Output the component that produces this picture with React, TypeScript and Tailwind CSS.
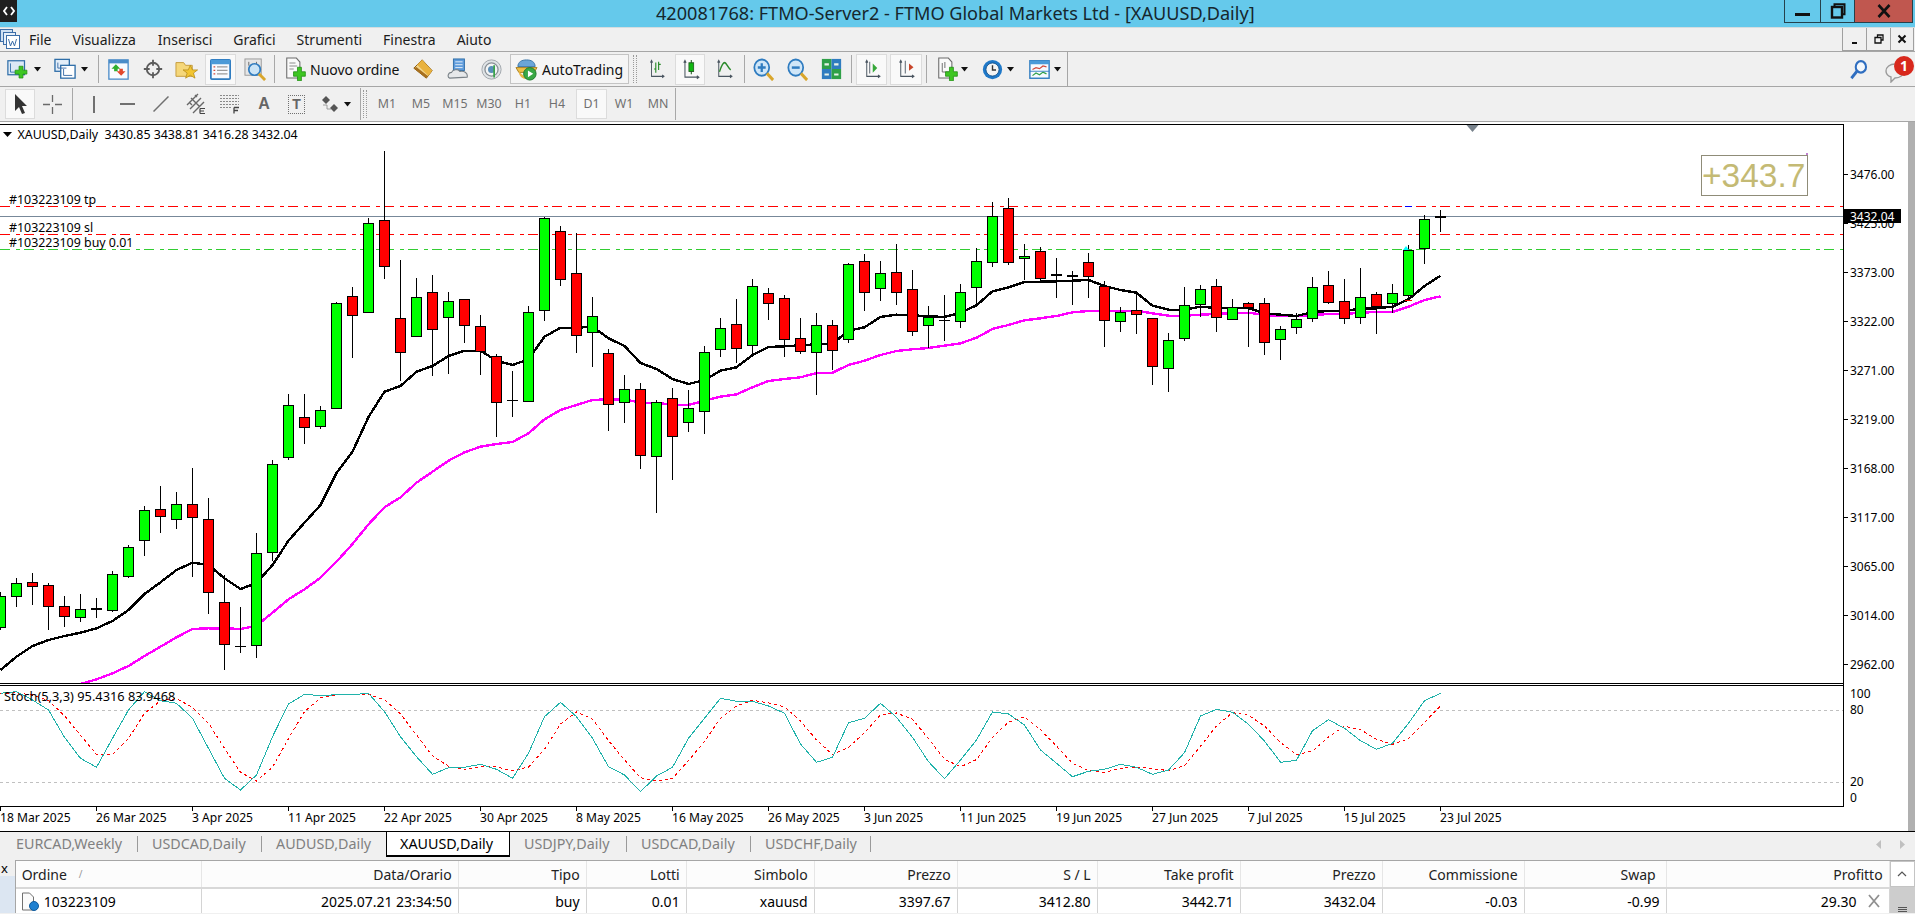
import React from "react";

type Kind = "g" | "r" | "d" | "t";
// [wickTop, bodyTop, bodyBottom, wickBottom, kind] measured against a base row (y = base + v / 3)
const A: [number, number, number, number, Kind][] = [
  [517, 529, 622, 630, "g"], [475, 490, 529, 560, "g"], [460, 487, 499, 555, "r"], [490, 496, 559, 629, "r"],
  [529, 559, 587, 620, "r"], [522, 568, 592, 605, "g"], [534, 566, 566, 593, "d"], [453, 463, 569, 575, "g"],
  [376, 382, 467, 473, "g"], [259, 271, 361, 407, "g"], [198, 268, 289, 338, "r"], [216, 253, 298, 326, "g"],
  [144, 253, 292, 470, "r"], [235, 298, 517, 581, "r"], [465, 547, 673, 749, "r"], [561, 677, 677, 698, "t"],
  [339, 400, 676, 713, "g"], [120, 133, 397, 423, "g"],
];
const B: [number, number, number, number, Kind][] = [
  [822, 856, 1012, 1019, "g"], [822, 892, 922, 971, "r"], [858, 871, 919, 926, "g"], [547, 550, 865, 865, "g"],
  [501, 529, 586, 713, "r"], [293, 310, 577, 577, "g"], [93, 301, 439, 476, "r"], [420, 595, 697, 782, "r"],
  [474, 532, 649, 652, "g"], [465, 517, 628, 767, "r"], [516, 544, 592, 761, "g"], [538, 538, 616, 668, "r"],
  [586, 619, 694, 764, "r"], [703, 709, 847, 950, "r"], [753, 841, 841, 890, "t"], [559, 577, 844, 844, "g"],
  [292, 295, 571, 602, "g"], [319, 334, 478, 497, "r"], [340, 460, 646, 700, "r"], [531, 589, 637, 740, "g"],
  [688, 700, 853, 932, "r"], [766, 808, 847, 908, "g"],
];
const D: [number, number, number, number, Kind][] = [
  [610, 628, 826, 866, "r"], [660, 667, 829, 999, "g"], [625, 655, 769, 900, "r"], [630, 685, 727, 755, "g"],
  [498, 517, 694, 761, "g"], [414, 445, 508, 530, "g"], [357, 433, 505, 549, "r"], [297, 319, 496, 530, "g"],
  [324, 340, 370, 420, "r"], [346, 355, 478, 530, "r"], [414, 475, 514, 521, "r"], [400, 436, 517, 644, "g"],
  [420, 436, 511, 569, "r"], [250, 253, 478, 488, "g"], [222, 244, 337, 392, "r"], [243, 280, 325, 362, "g"],
  [193, 277, 337, 375, "r"], [270, 328, 454, 467, "r"], [378, 411, 436, 505, "g"], [346, 421, 421, 482, "t"],
  [312, 337, 424, 443, "g"], [205, 244, 322, 376, "g"], [67, 109, 247, 260, "g"], [55, 85, 247, 254, "r"],
  [193, 229, 235, 300, "g"], [201, 214, 295, 302, "r"], [235, 285, 285, 353, "d"], [274, 288, 288, 374, "d"],
  [220, 247, 289, 353, "r"], [304, 319, 421, 500, "r"], [381, 397, 424, 455, "g"], [340, 391, 403, 461, "r"],
  [415, 415, 559, 614, "r"], [460, 481, 565, 635, "g"], [321, 376, 475, 482, "g"], [316, 328, 373, 410, "g"],
  [297, 319, 412, 455, "r"], [358, 382, 418, 421, "g"], [367, 370, 382, 500, "r"], [354, 370, 487, 524, "r"],
  [438, 448, 478, 539, "g"], [400, 418, 442, 461, "g"], [291, 322, 415, 425, "g"], [273, 316, 367, 371, "r"],
  [297, 364, 415, 431, "r"], [265, 352, 412, 431, "g"], [337, 343, 379, 461, "r"], [312, 340, 370, 398, "g"],
  [196, 211, 346, 361, "g"], [105, 118, 205, 251, "g"], [90, 111, 111, 155, "d"],
];
const scale = (rows: typeof A, base: number) =>
  rows.map(([a, b, c, d, k]) => [base + a / 3, base + b / 3, base + c / 3, base + d / 3, k] as [number, number, number, number, Kind]);
const candles = [...scale(A, 420), ...scale(B, 120), ...scale(D, 180)];

const black = [670, 656.7, 646, 640, 636, 632.7, 628.3, 621, 610, 594, 582.3, 570, 562.7, 565, 578.3, 589, 583, 565, 540.7, 522.7, 505, 473, 451.7, 417, 391.7, 386, 371.7, 366, 356, 350.7, 350.7, 360.7, 365, 359.3, 336.7, 327.7, 327.7, 326.7, 338.3, 346, 363, 369, 379, 384, 380, 370.7, 367.3, 355, 347, 346.3, 345.3, 344.3, 343.7, 330.7, 327.3, 317, 314.7, 315.3, 316.3, 317, 312.7, 305.3, 291.3, 287.3, 282, 281.7, 281.3, 280.7, 280, 286, 290, 292.7, 305.7, 309.7, 309.7, 306.7, 308, 307.7, 308, 313.3, 314.7, 316, 312, 311, 311, 308.7, 308.3, 306.7, 299.3, 286, 275.7];
const magenta = [720, 712, 705, 698, 692, 684, 679.3, 673.3, 666, 656, 646.7, 637.3, 629, 628.3, 628.3, 629, 625.7, 612.7, 599.3, 589.3, 577.7, 561.7, 544, 524.3, 507.3, 497.3, 482.7, 471.7, 460.7, 452.3, 446.7, 444, 442, 433.3, 419.3, 410, 405, 400, 399.3, 399.3, 402.7, 402.7, 405, 405, 400.7, 396.7, 394.3, 387.3, 381, 379, 377.3, 373, 372.7, 365, 360.7, 355, 351, 349.3, 348, 345.7, 343.3, 337.7, 329, 325, 320.3, 318.3, 316, 312.3, 311, 310.7, 310.7, 310.7, 313.3, 315.7, 315.7, 314.7, 314, 313, 312.7, 315, 316, 316, 315, 314, 314, 312.7, 312, 312, 306.7, 300, 296.3];
const stochZ = [40, 35, 60, 90, 172, 235, 262, 175, 90, 35, 62, 70, 115, 205, 295, 330, 285, 170, 72, 43, 47, 44, 44, 40, 95, 170, 230, 283, 263, 262, 253, 268, 295, 220, 110, 67, 110, 175, 260, 285, 335, 288, 262, 175, 115, 55, 64, 64, 78, 100, 192, 247, 232, 128, 115, 70, 112, 172, 245, 296, 240, 180, 96, 102, 135, 210, 250, 290, 274, 268, 253, 262, 283, 270, 218, 108, 88, 97, 133, 183, 247, 241, 152, 119, 145, 182, 208, 190, 130, 62, 40];
const stoch = stochZ.map((v) => 680 + v / 3);
const signal = stoch.map((_, i) => (stoch[Math.max(0, i - 2)] + stoch[Math.max(0, i - 1)] + stoch[i]) / 3);
const pts = (a: number[]) => a.map((y, i) => `${16 * i + 0.5},${y.toFixed(1)}`).join(" ");

const prices: [string, number][] = [["3476.00", 174.5], ["3425.00", 223.5], ["3373.00", 272.5], ["3322.00", 321.5], ["3271.00", 370.5], ["3219.00", 419.5], ["3168.00", 468.5], ["3117.00", 517.5], ["3065.00", 566.5], ["3014.00", 615.5], ["2962.00", 664.5]];
const dates = ["18 Mar 2025", "26 Mar 2025", "3 Apr 2025", "11 Apr 2025", "22 Apr 2025", "30 Apr 2025", "8 May 2025", "16 May 2025", "26 May 2025", "3 Jun 2025", "11 Jun 2025", "19 Jun 2025", "27 Jun 2025", "7 Jul 2025", "15 Jul 2025", "23 Jul 2025"];

function Chart() {
  return (
    <svg width={1908} height={710} viewBox="0 122 1908 710" className="block shrink-0">
      <defs>
        <clipPath id="mainPane"><rect x="0" y="125" width="1843" height="558" /></clipPath>
        <clipPath id="stochPane"><rect x="0" y="686" width="1843" height="120" /></clipPath>
      </defs>
      <rect x="0" y="122" width="1908" height="710" fill="#ffffff" />
      <g clipPath="url(#mainPane)">
        <g shapeRendering="crispEdges">
          <line x1="0" x2="1843" y1="206.5" y2="206.5" stroke="#ff0000" strokeDasharray="10 6 4 4" />
          <line x1="0" x2="1843" y1="234.5" y2="234.5" stroke="#ff0000" strokeDasharray="10 6 4 4" />
          <line x1="0" x2="1843" y1="249.5" y2="249.5" stroke="#32cd32" strokeDasharray="10 6 4 4" />
          <line x1="0" x2="1843" y1="216.5" y2="216.5" stroke="#778899" />
        </g>
        <polyline points={pts(magenta)} fill="none" stroke="#ff00ff" strokeWidth="2.4" shapeRendering="crispEdges" />
        <polyline points={pts(black)} fill="none" stroke="#000000" strokeWidth="2.4" shapeRendering="crispEdges" />
        <g shapeRendering="crispEdges">
          {candles.map(([wt, bt, bb, wb, k], i) => {
            const x = 16 * i;
            const top = Math.round(bt);
            const bot = Math.round(bb);
            return (
              <g key={i}>
                <line x1={x + 0.5} x2={x + 0.5} y1={Math.round(wt)} y2={Math.round(wb)} stroke="#000000" />
                {k === "d" && <rect x={x - 5} y={top - 1} width={11} height={2} fill="#000000" />}
                {k === "t" && <rect x={x - 5} y={top} width={11} height={1} fill="#000000" />}
                {(k === "g" || k === "r") && (
                  <rect x={x - 4.5} y={top + 0.5} width={10} height={bot - top} fill={k === "g" ? "#00ff00" : "#ff0000"} stroke="#000000" />
                )}
              </g>
            );
          })}
        </g>
        <rect x="1405" y="206" width="7" height="1" fill="#0000ff" />
        <rect x="1405" y="300" width="7" height="1" fill="#ff0000" />
        <path d="M1403 250l3-4 3 4z" fill="#00ffff" />
        <text x="9" y="204" fontSize="12.4" fill="#000000">#103223109 tp</text>
        <text x="9" y="232" fontSize="12.4" fill="#000000">#103223109 sl</text>
        <text x="9" y="247" fontSize="12.4" fill="#000000">#103223109 buy 0.01</text>
        <path d="M3 132h9l-4.5 5z" fill="#000000" />
        <text x="17.5" y="139" fontSize="12.4" fill="#000000" xmlSpace="preserve">XAUUSD,Daily  3430.85 3438.81 3416.28 3432.04</text>
        <path d="M1466.5 125h12l-6 7z" fill="#78828c" />
        <rect x="1701.5" y="155.5" width="106" height="40" fill="#ffffff" stroke="#8f8c78" />
        <rect x="1806" y="153" width="2" height="2" fill="#c080d0" />
        <text x="1702" y="187" fontSize="33.5" fill="#c4ba74" className="font-['Liberation_Sans',sans-serif]">+343.7</text>
      </g>
      <g clipPath="url(#stochPane)">
        <line x1="0" x2="1843" y1="710.5" y2="710.5" stroke="#c0c0c0" strokeDasharray="3 3" />
        <line x1="0" x2="1843" y1="782.5" y2="782.5" stroke="#c0c0c0" strokeDasharray="3 3" />
        <polyline points={pts(signal)} fill="none" stroke="#ff0000" strokeDasharray="3 3" shapeRendering="crispEdges" />
        <polyline points={pts(stoch)} fill="none" stroke="#20b2aa" shapeRendering="crispEdges" />
        <text x="4" y="701" fontSize="12.8" fill="#000000">Stoch(5,3,3) 95.4316 83.9468</text>
      </g>
      <g shapeRendering="crispEdges" stroke="#000000">
        <line x1="0" x2="1844" y1="124" y2="124" strokeWidth="1" />
        <line x1="0" x2="1844" y1="683.5" y2="683.5" />
        <line x1="0" x2="1844" y1="685.5" y2="685.5" />
        <line x1="0" x2="1844" y1="806.5" y2="806.5" />
        <line x1="1843.5" x2="1843.5" y1="124" y2="807" />
        {prices.map(([, y]) => <line key={y} x1="1844" x2="1848" y1={y} y2={y} />)}
        {dates.map((_, i) => <line key={i} x1={96 * i + 0.5} x2={96 * i + 0.5} y1="807" y2="811" />)}
      </g>
      {prices.map(([p, y]) => (
        <text key={p} x="1850" y={y + 4.5} fontSize="12" fill="#000000">{p}</text>
      ))}
      <rect x="1844" y="209" width="57" height="14" fill="#000000" />
      <text x="1850" y="220.5" fontSize="12" fill="#ffffff">3432.04</text>
      <text x="1850" y="698" fontSize="12" fill="#000000">100</text>
      <text x="1850" y="714" fontSize="12" fill="#000000">80</text>
      <text x="1850" y="786" fontSize="12" fill="#000000">20</text>
      <text x="1850" y="802" fontSize="12" fill="#000000">0</text>
      {dates.map((d, i) => (
        <text key={d} x={96 * i} y="821.5" fontSize="12.1" fill="#000000">{d}</text>
      ))}
    </svg>
  );
}

const Plus = ({ x, y, s = 4 }: { x: number; y: number; s?: number }) => (
  <path
    d={`M${x - s / 2} ${y - s * 1.5}h${s}v${s}h${s}v${s}h${-s}v${s}h${-s}v${-s}h${-s}v${-s}h${s}z`}
    fill="#3ec622"
    stroke="#1c8a10"
    strokeWidth="0.8"
  />
);

const Axes = () => (
  <path d="M5 3v17h17M3.5 5L5 2.5 6.5 5M20 18.5l2.5 1.5-2.5 1.5" fill="none" stroke="#4a5560" strokeWidth="1.3" />
);

const Ic = ({ w, h, children }: { w: number; h: number; children: React.ReactNode }) => (
  <svg width={w} height={h} viewBox="0 0 24 24" preserveAspectRatio="none" className="block">{children}</svg>
);

const Caret = () => (
  <svg width="7" height="5" viewBox="0 0 7 5" className="block"><path d="M0 0h7L3.5 4.5z" fill="#111111" /></svg>
);

const Sep = ({ className }: { className: string }) => <div className={`h-[28px] w-px bg-[#a8a8a8] ${className}`} />;

function TitleBar() {
  return (
    <div className="flex h-[27px] shrink-0 items-start bg-[#65c9eb]">
      <div className="flex h-[22px] w-[17px] items-center justify-center bg-[#1f1f1f]">
        <svg width="12" height="12" viewBox="0 0 12 12">
          <path d="M4 2L1 6l3 4M8 2l3 4-3 4" fill="none" stroke="#ffffff" strokeWidth="1.8" />
        </svg>
      </div>
      <div className="ml-[639px] whitespace-nowrap text-[18.1px] leading-[26px] text-[#16272e]">
        420081768: FTMO-Server2 - FTMO Global Markets Ltd - [XAUUSD,Daily]
      </div>
      <div className="ml-auto mr-[2px] flex h-[23px]">
        <div className="flex w-[37px] items-end justify-center border-x border-b border-[#25414c] pb-[6px]">
          <div className="h-[3px] w-[15px] bg-[#111111]" />
        </div>
        <div className="flex w-[33px] items-center justify-center border-b border-[#25414c]">
          <svg width="16" height="16" viewBox="0 0 16 16">
            <path d="M4.5 3.5V1.2h10v10h-2.5" fill="none" stroke="#111111" strokeWidth="2" />
            <rect x="2" y="4" width="10" height="10.5" fill="none" stroke="#111111" strokeWidth="2.4" />
          </svg>
        </div>
        <div className="flex w-[59px] items-center justify-center border-x border-b border-[#25414c] bg-[#c0574f]">
          <svg width="14" height="14" viewBox="0 0 14 14">
            <path d="M1.5 1L12.5 13M12.5 1L1.5 13" stroke="#111111" strokeWidth="2.6" />
          </svg>
        </div>
      </div>
    </div>
  );
}

function MenuBar() {
  return (
    <div className="flex h-[25px] shrink-0 items-center border-y border-b-[#a6a6a6] border-t-[#d4dde0] bg-[#f0f0f0] text-[14px] text-[#1c1c1c]">
      <div className="w-[20px]">
        <svg width="20" height="21" viewBox="0 0 20 21" className="block">
          <rect x="0.5" y="0.5" width="12" height="12" fill="#cfe0f2" stroke="#3d6ea8" />
          <rect x="3.5" y="3.5" width="12" height="12" fill="#e6eff9" stroke="#3d6ea8" />
          <rect x="6.5" y="6.5" width="13" height="13" fill="#ffffff" stroke="#3d6ea8" />
          <path d="M8.5 10l2 7 2-5 2 5 2-7" fill="none" stroke="#3d6ea8" strokeWidth="1" />
        </svg>
      </div>
      <div className="ml-[9px] flex gap-[21px]">
        <span>File</span>
        <span>Visualizza</span>
        <span className="ml-[1px]">Inserisci</span>
        <span>Grafici</span>
        <span>Strumenti</span>
        <span>Finestra</span>
        <span>Aiuto</span>
      </div>
      <div className="ml-auto mr-px flex h-[23px] self-start">
        {["min", "max", "close"].map((k) => (
          <div key={k} className="flex w-[24px] items-center justify-center border-b border-l border-[#a0a0a0] last:border-r">
            <svg width="10" height="10" viewBox="0 0 10 10">
              {k === "min" && <rect x="2" y="8" width="5" height="2" fill="#111111" />}
              {k === "max" && <path d="M3.5 3V1h5.5v5H7M1 3.5h6v5.5H1z" fill="none" stroke="#111111" strokeWidth="1.3" />}
              {k === "close" && <path d="M1.5 1.5l7 7M8.5 1.5l-7 7" stroke="#111111" strokeWidth="2" />}
            </svg>
          </div>
        ))}
      </div>
    </div>
  );
}

function ToolbarOne() {
  return (
    <div className="flex h-[35px] shrink-0 items-center border-b border-[#a6a6a6] bg-[#f0f0f0] text-[14px] text-[#111111]">
      <div className="flex h-full w-[1071px] items-center border-r border-[#a6a6a6]">
        <div className="ml-[7px] w-[20px]">
          <Ic w={21} h={21}><rect x="1" y="2" width="19" height="16" fill="#dce9f6" stroke="#2f6ea8" strokeWidth="1.4" /><path d="M4 5v10h12" fill="none" stroke="#2f6ea8" /><Plus x={16} y={15} s={4.5} /></Ic>
        </div>
        <div className="ml-[7px] w-[7px]"><Caret /></div>
        <div className="ml-[13px] w-[23px]">
          <Ic w={23} h={22}><rect x="1" y="1.5" width="15" height="13" fill="#e4eef8" stroke="#2f6ea8" strokeWidth="1.4" /><rect x="7" y="8" width="15" height="14" fill="#ffffff" stroke="#2f6ea8" strokeWidth="1.4" /><path d="M4 5v6h9M10 12v7h9" fill="none" stroke="#3d6ea8" /></Ic>
        </div>
        <div className="ml-[4px] w-[7px]"><Caret /></div>
        <Sep className="ml-[10px]" />
        <div className="ml-[9px] w-[21px]">
          <Ic w={21} h={21}><rect x="1" y="1" width="22" height="22" fill="#f8fbff" stroke="#4a8cc8" strokeWidth="1.5" /><rect x="1" y="1" width="22" height="4" fill="#4a8cc8" /><path d="M9 6l5 5h-3v3H7v-3H4z" fill="#2eae2e" /><path d="M15 19l-5-5h3v-3h4v3h3z" fill="#e2482c" /></Ic>
        </div>
        <div className="ml-[14px] w-[20px]">
          <Ic w={20} h={20}><circle cx="12" cy="12" r="7.5" fill="none" stroke="#5c5c5c" strokeWidth="2.2" /><path d="M12 1v7M12 16v7M1 12h7M16 12h7" stroke="#5c5c5c" strokeWidth="2.2" /></Ic>
        </div>
        <div className="ml-[12px] w-[23px]">
          <Ic w={23} h={22}><path d="M1 5h8l2 3h7v12H1z" fill="#f5d77a" stroke="#c49b3c" /><path d="M16 8l2.2 5h5.4l-4.3 3.4 1.6 5.6-4.9-3.2-4.9 3.2 1.6-5.6-4.3-3.4h5.4z" fill="#f2c531" stroke="#b48a18" strokeWidth="0.8" /></Ic>
        </div>
        <div className="ml-[7px] flex h-[31px] w-[31px] items-center justify-center border border-[#dcdcdc] bg-[#f9f9f9]">
          <Ic w={21} h={21}><rect x="1" y="1" width="22" height="22" rx="1" fill="#f6faff" stroke="#2f7cc0" strokeWidth="2" /><rect x="1" y="1" width="22" height="5" fill="#4a9ad8" /><path d="M8 9h12M8 13h12M8 17h12" stroke="#9a9a9a" strokeWidth="1.4" /><path d="M4 9h2M4 13h2M4 17h2" stroke="#d24a3a" strokeWidth="1.6" /></Ic>
        </div>
        <div className="ml-[8px] w-[23px]">
          <Ic w={23} h={23}><rect x="1" y="1" width="17" height="17" fill="#e6e6e6" stroke="#9a9a9a" /><path d="M5 4v4M9 6v4M13 4v5" stroke="#6a6a6a" /><circle cx="11" cy="12" r="6" fill="#cbe4f6" stroke="#2f7cc0" strokeWidth="1.8" /><path d="M15.5 16.5L22 23" stroke="#d9a62c" strokeWidth="3" /></Ic>
        </div>
        <Sep className="ml-[7px]" />
        <div className="ml-[10px] w-[21px]">
          <Ic w={21} h={24}><path d="M2 1h11l4 4v16H2z" fill="#fafafa" stroke="#6a6a6a" strokeWidth="1.2" /><path d="M5 6h7M5 9h9M5 12h5" stroke="#888888" /><Plus x={16.5} y={17} s={4.5} /></Ic>
        </div>
        <div className="ml-[4px] w-[91px] whitespace-nowrap">Nuovo ordine</div>
        <div className="ml-[12px] w-[20px]">
          <Ic w={20} h={20}><path d="M1 11L11 1l12 13-7 9z" fill="#f2d58c" stroke="#8a5f18" strokeWidth="1.2" /><path d="M1 11l15 12 1.500-3L4 9.500z" fill="#a8701e" /><path d="M11 1l12 13-4.500 6L5 7z" fill="#e9b23e" /></Ic>
        </div>
        <div className="ml-[14px] w-[22px]">
          <Ic w={22} h={23}><rect x="7" y="1" width="12" height="12" fill="#5f9cdc" stroke="#2f6ea8" /><path d="M9 4h8M9 7h8M9 10h8" stroke="#e6f0fa" /><path d="M3 21c-3-1-2-6 2-6 1-3 7-4 9-1 5-1 9 2 8 6z" fill="#e6e8ea" stroke="#7a8288" strokeWidth="1.2" /></Ic>
        </div>
        <div className="ml-[12px] w-[21px]">
          <Ic w={21} h={21}><circle cx="12" cy="12" r="11" fill="#dfe3e6" stroke="#9aa0a6" /><circle cx="12" cy="12" r="7.5" fill="#f2f4f5" stroke="#8a9096" strokeWidth="1.5" /><circle cx="12" cy="12" r="4" fill="#5a8fb8" /><path d="M15 7v14" stroke="#3aa34a" strokeWidth="2" /></Ic>
        </div>
        <div className="ml-[8px] flex h-[30px] w-[119px] items-center border border-[#c4c4c4] bg-[#f5f5f5] pl-[4px]">
          <Ic w={23} h={23}><path d="M3 9c0-5 4-7 9-7s9 2 9 7z" fill="#6aa5d8" stroke="#3c76a8" /><path d="M1 10h22l-3 5H4z" fill="#f0c14a" stroke="#a87e20" /><path d="M4 14c0 5 4 8 9 8z" fill="#e8b640" /><circle cx="15.5" cy="16.5" r="6.5" fill="#39a845" stroke="#1f7a2c" /><path d="M13.5 13v7l5.5-3.5z" fill="#ffffff" /></Ic>
          <span className="ml-[4px]">AutoTrading</span>
        </div>
        <div className="ml-[4px] h-[28px] w-[4px] border-x border-dotted border-[#9a9a9a]" />
        <div className="ml-[11px] w-[17px]">
          <Ic w={17} h={22}><Axes /><path d="M11 5v11M15 4v9" stroke="#2a8a2a" strokeWidth="1.6" /><path d="M9 12h2M15 7h3" stroke="#2a8a2a" strokeWidth="1.4" /></Ic>
        </div>
        <div className="ml-[10px] flex h-[31px] w-[30px] items-center justify-center border border-[#dcdcdc] bg-[#f9f9f9]">
          <Ic w={19} h={23}><Axes /><path d="M13 2v15" stroke="#1d5a1d" strokeWidth="1.3" /><rect x="10" y="5" width="6" height="9" fill="#11b811" stroke="#1d5a1d" /></Ic>
        </div>
        <div className="ml-[10px] w-[18px]">
          <Ic w={18} h={22}><Axes /><path d="M6 15c3-8 5-10 7-10s4 5 8 8" fill="none" stroke="#2a8a2a" strokeWidth="1.8" /></Ic>
        </div>
        <Sep className="ml-[11px]" />
        <div className="ml-[8px] w-[21px]">
          <Ic w={21} h={23}><circle cx="10" cy="10" r="8.5" fill="#cfe6f8" stroke="#2f7cc0" strokeWidth="2" /><path d="M10 5.5v9M5.5 10h9" stroke="#2f7cc0" strokeWidth="2.6" /><path d="M16 16l7 7" stroke="#d9a62c" strokeWidth="3.4" /></Ic>
        </div>
        <div className="ml-[13px] w-[21px]">
          <Ic w={21} h={23}><circle cx="10" cy="10" r="8.5" fill="#cfe6f8" stroke="#2f7cc0" strokeWidth="2" /><path d="M5.5 10h9" stroke="#2f7cc0" strokeWidth="2.6" /><path d="M16 16l7 7" stroke="#d9a62c" strokeWidth="3.4" /></Ic>
        </div>
        <div className="ml-[13px] w-[21px]">
          <Ic w={21} h={22}><rect x="1" y="1" width="11" height="11" fill="#2fa048" /><rect x="12" y="1" width="11" height="11" fill="#2f7cc0" /><rect x="1" y="12" width="11" height="11" fill="#2f7cc0" /><rect x="12" y="12" width="11" height="11" fill="#2fa048" /><path d="M4 7h5M15 7h5M4 18h5M15 18h5" stroke="#e8f2e8" strokeWidth="2.4" /></Ic>
        </div>
        <Sep className="ml-[9px]" />
        <div className="ml-[4px] flex h-[31px] w-[31px] items-center justify-center border border-[#dcdcdc] bg-[#f9f9f9]">
          <Ic w={18} h={22}><Axes /><path d="M9 4v13" stroke="#4a5560" strokeWidth="1.2" /><path d="M13 6l6 5-6 5z" fill="#37a83a" /></Ic>
        </div>
        <div className="ml-[3px] flex h-[31px] w-[32px] items-center justify-center border border-[#dcdcdc] bg-[#f9f9f9]">
          <Ic w={18} h={22}><Axes /><path d="M11 3v14" stroke="#4a5560" strokeWidth="1.2" /><path d="M22 10l-6-4v8z" fill="#c8452a" /></Ic>
        </div>
        <Sep className="ml-[4px]" />
        <div className="ml-[10px] w-[21px]">
          <Ic w={21} h={24}><path d="M2 1h11l4 4v16H2z" fill="#fafafa" stroke="#6a6a6a" strokeWidth="1.2" /><path d="M6 6v9h8M9 5v6" fill="none" stroke="#6a6a6a" /><Plus x={16.5} y={17} s={4.5} /></Ic>
        </div>
        <div className="ml-[3px] w-[7px]"><Caret /></div>
        <div className="ml-[14px] w-[21px]">
          <Ic w={21} h={21}><circle cx="12" cy="12" r="11" fill="#1f78c8" /><circle cx="12" cy="12" r="7.5" fill="#f4f4f4" stroke="#0f4f8a" /><path d="M12 7v5.5h4" fill="none" stroke="#333333" strokeWidth="1.6" /></Ic>
        </div>
        <div className="ml-[4px] w-[7px]"><Caret /></div>
        <div className="ml-[15px] w-[21px]">
          <Ic w={21} h={21}><rect x="1" y="2" width="22" height="20" fill="#f6faff" stroke="#2f7cc0" strokeWidth="1.6" /><rect x="1" y="2" width="22" height="4" fill="#4a9ad8" /><path d="M4 12l4-2 4 1 4-3 4 1" fill="none" stroke="#d24a3a" strokeWidth="1.4" /><path d="M4 19l4-3 4 2 4-3 4 2" fill="none" stroke="#2fa048" strokeWidth="1.4" /><path d="M1 14h22" stroke="#2f7cc0" /></Ic>
        </div>
        <div className="ml-[4px] w-[7px]"><Caret /></div>
      </div>
      <div className="ml-[781px] w-[19px]">
        <Ic w={19} h={21}><circle cx="15" cy="9" r="6.5" fill="#f4f8fc" stroke="#2f6ec0" strokeWidth="2.6" /><path d="M10 14L3 22" stroke="#2f6ec0" strokeWidth="3.6" /></Ic>
      </div>
      <div className="relative ml-[17px] h-[28px] w-[30px]">
        <svg width="22" height="20" viewBox="0 0 22 20" className="absolute bottom-0 left-0 block">
          <path d="M1 8c0-4 4-7 9-7s9 3 9 7-4 7-9 7l-4 4v-5c-3-1-5-3-5-6z" fill="#f0f0f0" stroke="#9a9a9a" strokeWidth="1.4" />
        </svg>
        <div className="absolute right-[1px] top-[1px] flex h-[20px] w-[20px] items-center justify-center rounded-full bg-[#d8281c] text-[14px] font-bold leading-none text-white">1</div>
      </div>
    </div>
  );
}

function ToolbarTwo() {
  const tf = "text-[12.4px] text-[#707070] text-center";
  return (
    <div className="flex h-[34px] shrink-0 items-center bg-[#f0f0f0]">
      <div className="ml-[5px] flex h-[30px] w-[30px] items-center justify-center border border-[#dcdcdc] bg-[#f9f9f9]">
        <svg width="14" height="22" viewBox="0 0 14 22"><path d="M2 1v17l4-4 3 7 3-1-3-7h5z" fill="#333333" /></svg>
      </div>
      <div className="ml-[8px] w-[19px]">
        <svg width="19" height="19" viewBox="0 0 19 19"><path d="M9.5 0v7M9.5 12v7M0 9.5h7M12 9.5h7" stroke="#6a6a6a" strokeWidth="1.3" /></svg>
      </div>
      <div className="ml-[10px] h-[32px] w-px bg-[#a8a8a8]" />
      <div className="ml-[20px] h-[17px] w-[2px] bg-[#707070]" />
      <div className="ml-[25px] h-[2px] w-[15px] bg-[#707070]" />
      <div className="ml-[18px] w-[16px]">
        <svg width="16" height="16" viewBox="0 0 16 16"><path d="M0.5 15.5L15.5 0.5" stroke="#707070" strokeWidth="1.5" /></svg>
      </div>
      <div className="ml-[17px] w-[20px]">
        <svg width="20" height="22" viewBox="0 0 20 22"><path d="M1 12L12 1M4 16L15 5M7 20L18 9M5 5l9 9M9 2l2 2M3 9l3 3" fill="none" stroke="#686868" strokeWidth="1.4" /><path d="M14 15.5h5M14 18h4M14 20.500h5M14 15.500v5" stroke="#444444" strokeWidth="1.2" fill="none" /></svg>
      </div>
      <div className="ml-[14px] w-[19px]">
        <svg width="19" height="20" viewBox="0 0 19 20"><path d="M0 1.500h19M0 4.500h19M0 7.500h19M0 10.500h19M0 13.500h12" stroke="#8a8a8a" strokeDasharray="2 1" /><path d="M14 13.500h5M14 13.500v6M14 16.500h4" stroke="#444444" strokeWidth="1.3" fill="none" /></svg>
      </div>
      <div className="ml-[18px] w-[14px] text-center font-['Liberation_Sans',sans-serif] text-[16px] font-bold leading-none text-[#666666]">A</div>
      <div className="ml-[17px] flex h-[19px] w-[17px] items-center justify-center border border-dotted border-[#707070] font-['Liberation_Sans',sans-serif] text-[14px] font-bold leading-none text-[#666666]">T</div>
      <div className="ml-[16px] w-[19px]">
        <svg width="19" height="17" viewBox="0 0 19 17"><path d="M5 0l4 4-4 4-4-4zM13 8l4 4-4 4-4-4z" fill="#555555" /><path d="M2 9h4v4h4" fill="none" stroke="#888888" strokeWidth="0.8" /></svg>
      </div>
      <div className="ml-[4px] w-[7px]"><Caret /></div>
      <div className="ml-[9px] h-[32px] w-px bg-[#a8a8a8]" />
      <div className="ml-[2px] h-[28px] w-[4px] border-x border-dotted border-[#9a9a9a]" />
      <div className={`ml-[6px] w-[28px] ${tf}`}>M1</div>
      <div className={`ml-[6px] w-[28px] ${tf}`}>M5</div>
      <div className={`ml-[6px] w-[28px] ${tf}`}>M15</div>
      <div className={`ml-[6px] w-[28px] ${tf}`}>M30</div>
      <div className={`ml-[6px] w-[28px] ${tf}`}>H1</div>
      <div className={`ml-[6px] w-[28px] ${tf}`}>H4</div>
      <div className={`ml-[5px] flex h-[30px] w-[31px] items-center justify-center border border-[#dcdcdc] bg-[#f9f9f9] ${tf}`}>D1</div>
      <div className={`ml-[3px] w-[28px] ${tf}`}>W1</div>
      <div className={`ml-[6px] w-[28px] ${tf}`}>MN</div>
      <div className="ml-[3px] h-[32px] w-px bg-[#a8a8a8]" />
    </div>
  );
}

function Tabs() {
  const t = "flex items-center pl-[14px] my-[4px] border-r border-[#9a9a9a] text-[#808080]";
  return (
    <div className="flex h-[29px] shrink-0 border-t border-black bg-[#f0f0f0] text-[14.3px]">
      <div className="flex h-[24px] w-full">
        <div className={`${t} w-[138px] !pl-[16px]`}>EURCAD,Weekly</div>
        <div className={`${t} w-[124px]`}>USDCAD,Daily</div>
        <div className="my-[4px] flex w-[124px] items-center pl-[14px] text-[#808080]">AUDUSD,Daily</div>
        <div className="flex h-[25px] w-[124px] items-center border-x border-b-2 border-black bg-white pl-[13px] text-black">XAUUSD,Daily</div>
        <div className={`${t} w-[117px]`}>USDJPY,Daily</div>
        <div className={`${t} w-[124px]`}>USDCAD,Daily</div>
        <div className={`${t} w-[120px]`}>USDCHF,Daily</div>
        <div className="ml-auto mr-[10px] flex items-center gap-[19px]">
          <svg width="5" height="9" viewBox="0 0 5 9"><path d="M5 0v9L0 4.500z" fill="#c0c0c0" /></svg>
          <svg width="5" height="9" viewBox="0 0 5 9"><path d="M0 0v9l5-4.500z" fill="#c0c0c0" /></svg>
        </div>
      </div>
    </div>
  );
}

const head = "flex h-[26px] items-center justify-end border-r border-[#e6e6e6] bg-[#fcfcfc] pr-[6px] text-[#222222]";
const cell = "flex h-[24px] items-center justify-end border-r border-[#d4d4d4] bg-white pr-[6px] text-black";

function Table() {
  const headers = ["Data/Orario", "Tipo", "Lotti", "Simbolo", "Prezzo", "S / L", "Take profit", "Prezzo", "Commissione"];
  const values = ["2025.07.21 23:34:50", "buy", "0.01", "xauusd", "3397.67", "3412.80", "3442.71", "3432.04", "-0.03"];
  return (
    <div className="flex h-[53px] shrink-0 bg-[#f0f0f0] text-[14px]">
      <div className="w-[15px] pt-[1px]">
        <div className="h-[15px] pl-[1px] text-[13px] leading-[14px] text-black">x</div>
        <div className="h-[37px] bg-[#dce6f2]" />
      </div>
      <div className="flex-1 border-l border-t border-[#a6a6a6] bg-white">
        <div className="grid grid-cols-[186px_257px_128px_100px_128px_143px_140px_143px_142px_142px_142px_223px] border-b-2 border-[#d8d8d8]">
          <div className={`${head} !justify-start pl-[6px]`}>Ordine<span className="ml-[12px] text-[10px] text-[#999999]">/</span></div>
          {headers.map((h, i) => <div key={i} className={head}>{h}</div>)}
          <div className={`${head} !pr-[10px]`}>Swap</div>
          <div className={head}>Profitto</div>
        </div>
        <div className="grid grid-cols-[186px_257px_128px_100px_128px_143px_140px_143px_142px_142px_142px_223px]">
          <div className={`${cell} !justify-start pl-[4px]`}>
            <svg width="19" height="19" viewBox="0 0 19 19" className="shrink-0">
              <path d="M2.500 1h7l4 4v13h-11z" fill="#fbfbfb" stroke="#707070" />
              <circle cx="14" cy="14" r="4.500" fill="#1f80d0" stroke="#0f5a9c" />
            </svg>
            <span className="ml-[5px]">103223109</span>
          </div>
          {values.map((v, i) => <div key={i} className={cell}>{v}</div>)}
          <div className={cell}>-0.99</div>
          <div className={`${cell} !pr-[9px]`}>
            <span>29.30</span>
            <svg width="12" height="14" viewBox="0 0 12 14" className="ml-[11px]">
              <path d="M1 1l10 12M11 1L1 13" stroke="#909090" strokeWidth="1.8" />
            </svg>
          </div>
        </div>
      </div>
      <div className="w-[26px] border-t border-[#a6a6a6]">
        <div className="flex h-[26px] items-center justify-center border border-[#c4c4c4] bg-white">
          <svg width="10" height="6" viewBox="0 0 10 6"><path d="M1 5l4-4 4 4" fill="none" stroke="#555555" strokeWidth="1.2" /></svg>
        </div>
        <div className="flex h-[26px] flex-col items-center justify-end gap-[1px] bg-[#cdcdcd] pb-[1px]">
          <div className="h-px w-[9px] bg-[#555555]" />
          <div className="h-px w-[9px] bg-[#555555]" />
          <div className="h-px w-[9px] bg-[#555555]" />
        </div>
      </div>
    </div>
  );
}

export default function App() {
  return (
    <div className="flex h-[914px] w-[1915px] flex-col overflow-hidden bg-[#f0f0f0] font-['Noto_Sans',sans-serif]">
      <TitleBar />
      <MenuBar />
      <ToolbarOne />
      <ToolbarTwo />
      <div className="flex h-[710px] shrink-0 border-t border-[#a6a6a6]">
        <Chart />
        <div className="flex-1 bg-[#b0b0b0]" />
      </div>
      <Tabs />
      <Table />
    </div>
  );
}
